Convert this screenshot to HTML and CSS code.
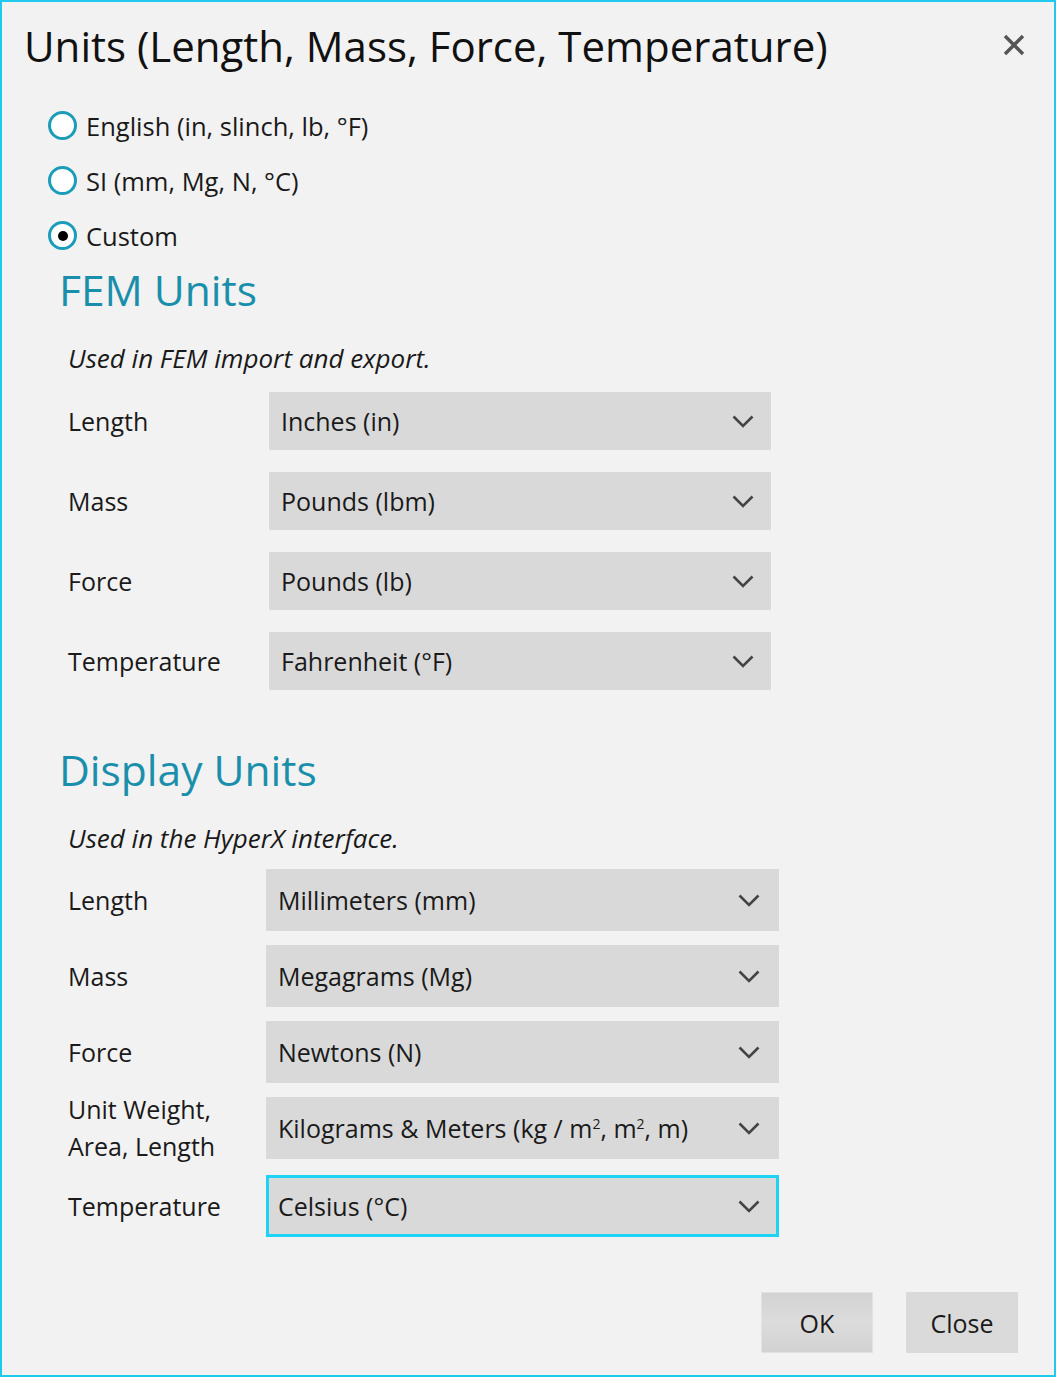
FILE: index.html
```html
<!DOCTYPE html>
<html lang="en">

<head>
    <meta charset="UTF-8">
    <title>Units</title>
    <link rel="stylesheet" href="styles.css">
</head>

<body>

    <div class="dialog">
        <div class="titlebar">
            <h1>Units (Length, Mass, Force, Temperature)</h1>
            <div class="closex">
                <svg width="22" height="22" viewBox="0 0 22 22"><path d="M2 2 L20 20 M20 2 L2 20" stroke="#555" stroke-width="3.4" fill="none"/></svg>
            </div>
        </div>

        <div class="modes">
            <div class="radiorow"><span class="radio"></span><span>English (in, slinch, lb, °F)</span></div>
            <div class="radiorow"><span class="radio"></span><span>SI (mm, Mg, N, °C)</span></div>
            <div class="radiorow"><span class="radio checked"></span><span>Custom</span></div>
        </div>

        <div class="group fem">
            <h2>FEM Units</h2>
            <p class="note">Used in FEM import and export.</p>
            <div class="fields">
                <div class="row">
                    <div class="lbl">Length</div>
                    <div class="combo"><span>Inches (in)</span><svg class="chev" width="22" height="13" viewBox="0 0 22 13"><polyline points="1.5,1.5 11,11 20.5,1.5" stroke="#444" stroke-width="2.6" fill="none"/></svg></div>
                </div>
                <div class="row">
                    <div class="lbl">Mass</div>
                    <div class="combo"><span>Pounds (lbm)</span><svg class="chev" width="22" height="13" viewBox="0 0 22 13"><polyline points="1.5,1.5 11,11 20.5,1.5" stroke="#444" stroke-width="2.6" fill="none"/></svg></div>
                </div>
                <div class="row">
                    <div class="lbl">Force</div>
                    <div class="combo"><span>Pounds (lb)</span><svg class="chev" width="22" height="13" viewBox="0 0 22 13"><polyline points="1.5,1.5 11,11 20.5,1.5" stroke="#444" stroke-width="2.6" fill="none"/></svg></div>
                </div>
                <div class="row">
                    <div class="lbl">Temperature</div>
                    <div class="combo"><span>Fahrenheit (°F)</span><svg class="chev" width="22" height="13" viewBox="0 0 22 13"><polyline points="1.5,1.5 11,11 20.5,1.5" stroke="#444" stroke-width="2.6" fill="none"/></svg></div>
                </div>
            </div>
        </div>

        <div class="group disp">
            <h2>Display Units</h2>
            <p class="note">Used in the HyperX interface.</p>
            <div class="fields">
                <div class="row">
                    <div class="lbl">Length</div>
                    <div class="combo"><span>Millimeters (mm)</span><svg class="chev" width="22" height="13" viewBox="0 0 22 13"><polyline points="1.5,1.5 11,11 20.5,1.5" stroke="#444" stroke-width="2.6" fill="none"/></svg></div>
                </div>
                <div class="row">
                    <div class="lbl">Mass</div>
                    <div class="combo"><span>Megagrams (Mg)</span><svg class="chev" width="22" height="13" viewBox="0 0 22 13"><polyline points="1.5,1.5 11,11 20.5,1.5" stroke="#444" stroke-width="2.6" fill="none"/></svg></div>
                </div>
                <div class="row">
                    <div class="lbl">Force</div>
                    <div class="combo"><span>Newtons (N)</span><svg class="chev" width="22" height="13" viewBox="0 0 22 13"><polyline points="1.5,1.5 11,11 20.5,1.5" stroke="#444" stroke-width="2.6" fill="none"/></svg></div>
                </div>
                <div class="row">
                    <div class="lbl two">Unit Weight,<br>Area, Length</div>
                    <div class="combo"><span>Kilograms &amp; Meters (kg / m<sup>2</sup>, m<sup>2</sup>, m)</span><svg class="chev" width="22" height="13" viewBox="0 0 22 13"><polyline points="1.5,1.5 11,11 20.5,1.5" stroke="#444" stroke-width="2.6" fill="none"/></svg></div>
                </div>
                <div class="row last">
                    <div class="lbl">Temperature</div>
                    <div class="combo focus"><span>Celsius (°C)</span><svg class="chev" width="22" height="13" viewBox="0 0 22 13"><polyline points="1.5,1.5 11,11 20.5,1.5" stroke="#444" stroke-width="2.6" fill="none"/></svg></div>
                </div>
            </div>
        </div>

        <div class="buttons">
            <button class="btn okbtn">OK</button>
            <button class="btn">Close</button>
        </div>
    </div>

</body>

</html>
```

FILE: styles.css
```css
* {
    font-family: "Open Sans", sans-serif;
    margin: 0;
    padding: 0;
    box-sizing: border-box;
}

body {
    background-color: #f2f2f2;
}

.dialog {
    width: 1056px;
    height: 1377px;
    border: 2px solid #1fc8ee;
    background-color: #f2f2f2;
    color: #1a1a1a;
}

.titlebar {
    display: flex;
    justify-content: space-between;
    align-items: center;
    height: 86px;
    padding-left: 22px;
    padding-right: 29px;
}

.titlebar h1 {
    font-size: 42px;
    font-weight: 400;
    color: #111;
}

.closex {
    display: flex;
}

.modes {
    padding-top: 10px;
    padding-left: 46px;
}

.radiorow {
    display: flex;
    align-items: center;
    gap: 9px;
    height: 55px;
    font-size: 25.5px;
}

.radio {
    width: 29px;
    height: 29px;
    border: 3.5px solid #1b9cb9;
    border-radius: 50%;
    background-color: #fff;
    display: flex;
    justify-content: center;
    align-items: center;
}

.radio.checked::after {
    content: "";
    width: 10px;
    height: 10px;
    border-radius: 50%;
    background-color: #000;
}

.group h2 {
    font-size: 42.5px;
    font-weight: 400;
    color: #1a8fab;
    line-height: 54px;
    padding-left: 57px;
}

.note {
    font-style: italic;
    font-size: 26px;
    line-height: 36px;
    margin-top: 23px;
    padding-left: 66px;
}

.fields {
    display: flex;
    flex-direction: column;
    padding-left: 66px;
}

.fem .fields {
    margin-top: 16px;
    gap: 22px;
}

.disp {
    margin-top: 53px;
}

.disp .fields {
    margin-top: 13px;
    gap: 14px;
}

.row {
    display: flex;
    align-items: center;
}

.disp .row {
    height: 62px;
}

.lbl {
    font-size: 25px;
}

.lbl.two {
    line-height: 37px;
}

.fem .lbl {
    width: 201px;
}

.disp .lbl {
    width: 198px;
}

.combo {
    display: flex;
    justify-content: space-between;
    align-items: center;
    background-color: #d9d9d9;
    font-size: 25px;
    padding-left: 12px;
}

.fem .combo {
    width: 502px;
    height: 58px;
    padding-right: 17px;
}

.disp .combo {
    width: 513px;
    height: 62px;
    padding-right: 19px;
}

.combo sup {
    font-size: 14px;
    line-height: 0;
}

.combo.focus {
    border: 3px solid #1cd2f5;
    padding-left: 9px;
    padding-right: 16px;
}

.row.last {
    margin-top: 2px;
}

.buttons {
    display: flex;
    justify-content: flex-end;
    gap: 33px;
    margin-top: 55px;
    padding-right: 36px;
}

.btn {
    width: 112px;
    height: 61px;
    border: none;
    background-color: #dadada;
    font-size: 25px;
    color: #1a1a1a;
}

.okbtn {
    background: linear-gradient(#d2d2d2, #dcdcdc 50%, #d2d2d2);
    border: 1px solid #e2e2e2;
}
```
